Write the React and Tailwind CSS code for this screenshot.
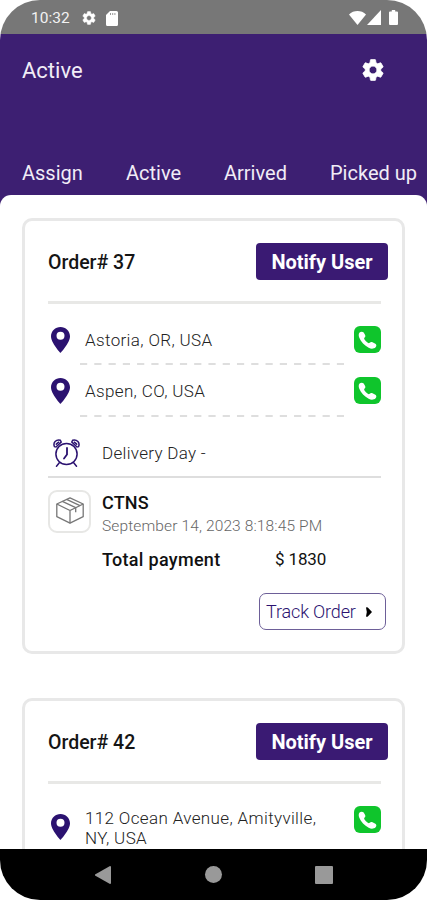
import React from 'react';

const tabs = [
    { label: 'Assign', width: 'w-[104px]' },
    { label: 'Active', width: 'w-[98px]' },
    { label: 'Arrived', width: 'w-[106px]' },
    { label: 'Picked up', width: 'w-[96px]' },
];

const orders = [
    {
        id: 37,
        stops: ['Astoria, OR, USA', 'Aspen, CO, USA'],
        name: 'CTNS',
        date: 'September 14, 2023 8:18:45 PM',
        total: 1830,
    },
    {
        id: 42,
        stops: ['112 Ocean Avenue, Amityville, NY, USA'],
    },
];

const gearPath =
    'M19.14 12.94c.04-.3.06-.61.06-.94 0-.32-.02-.64-.07-.94l2.03-1.58a.49.49 0 0 0 .12-.61l-1.92-3.32a.488.488 0 0 0-.59-.22l-2.39.96c-.5-.38-1.03-.7-1.62-.94l-.36-2.54a.484.484 0 0 0-.48-.41h-3.84c-.24 0-.43.17-.47.41l-.36 2.54c-.59.24-1.13.57-1.62.94l-2.39-.96c-.22-.08-.47 0-.59.22L2.74 8.87c-.12.21-.08.47.12.61l2.03 1.58c-.05.3-.09.63-.09.94s.02.64.07.94l-2.03 1.58a.49.49 0 0 0-.12.61l1.92 3.32c.12.22.37.29.59.22l2.39-.96c.5.38 1.03.7 1.62.94l.36 2.54c.05.24.24.41.48.41h3.84c.24 0 .44-.17.47-.41l.36-2.54c.59-.24 1.13-.56 1.62-.94l2.39.96c.22.08.47 0 .59-.22l1.92-3.32c.12-.22.07-.47-.12-.61l-2.01-1.58zM12 15.6c-1.98 0-3.6-1.62-3.6-3.6s1.62-3.6 3.6-3.6 3.6 1.62 3.6 3.6-1.62 3.6-3.6 3.6z';

const Gear = ({ className }) => (
    <svg viewBox="0 0 24 24" className={className} fill="currentColor" stroke="currentColor" strokeWidth="0.7">
        <path d={gearPath} />
    </svg>
);

const Pin = () => (
    <svg viewBox="0 0 19 26" className="w-[19px] h-[26px] shrink-0" fill="#2b1270">
        <path
            fillRule="evenodd"
            d="M9.5 0C4.3 0 0 4.1 0 9.3 0 16 9.5 26 9.5 26S19 16 19 9.3C19 4.1 14.7 0 9.5 0zm0 4.7a4 4 0 1 1 0 8 4 4 0 0 1 0-8z"
        />
    </svg>
);

const Phone = () => (
    <svg viewBox="0 0 27 27" className="w-[27px] h-[27px] shrink-0">
        <rect width="27" height="27" rx="6" fill="#0fc52c" />
        <path
            fill="#fff"
            d="M5.6 6.6c1-1.2 3-1.3 4.1 0l1.4 2.3c.5 1 .3 1.9-.5 2.7-.6.6-.6 1.1-.1 1.9.8 1.3 1.9 2.4 3.3 3.3.8.5 1.3.5 1.9-.1.8-.8 1.800-1 2.800-.5l2.900 1.500c1.200.9 1.300 2.400.2 3.500-1.700 1.700-4.300 1.900-6.900.6-4.300-2.200-7.700-5.900-9.400-10-.8-2-.9-3.800.3-5.200z"
        />
    </svg>
);

const AlarmClock = () => (
    <svg
        viewBox="0 0 27 28"
        className="w-[27px] h-[28px] shrink-0"
        fill="none"
        stroke="#2b1270"
        strokeWidth="1.5"
        strokeLinecap="round"
    >
        <circle cx="13.5" cy="15" r="10.6" />
        <path d="M14 9v6.500l-3 4" strokeWidth="1.800" />
        <path d="M1.500 7.700C-.3 3.700 3 .2 7.400 1.300L8.200 3 3 8z" />
        <path d="M25.500 7.700C27.300 3.700 24 .2 19.600 1.300L18.800 3 24 8z" />
        <path d="M3.300 5.200l2.400-2M23.700 5.200l-2.400-2" />
        <path d="M6.300 23.700l-2.800 3.500M20.700 23.700l2.800 3.500" />
    </svg>
);

const Box = () => (
    <svg
        viewBox="0 0 28 27"
        className="w-[28px] h-[27px] -mt-[2px]"
        fill="none"
        stroke="#777"
        strokeWidth="1.3"
        strokeLinejoin="round"
    >
        <path d="M14 .8L27.200 7v12.700L14 26.200.8 19.700V7z" />
        <path d="M.8 7L14 13.500 27.200 7M14 13.500v12.700" />
        <path d="M6.300 4.400l13.400 6.300v4.500M10.600 2.400L24 8.600" />
    </svg>
);

const Dashes = () => (
    <svg viewBox="0 0 264 2" className="block w-[264px] h-[2px] ml-[32px]">
        <path d="M0 1H264" stroke="#dedede" strokeWidth="2" strokeDasharray="7.2 7.07" />
    </svg>
);

const StatusBar = () => (
    <div className="flex items-center h-[34px] shrink-0 bg-[#777777] pl-[31px] pr-[29px] text-[#f2f2f2]">
        <span className="w-[50px] text-[15.5px] leading-[20px] pt-[2px]">10:32</span>
        <Gear className="w-[16px] h-[16px] text-white mt-[2px]" />
        <svg viewBox="0 0 12 15" className="w-[12px] h-[15px] ml-[9px] mt-[2px]" fill="#fff">
            <path
                fillRule="evenodd"
                d="M4 0h6.500A1.500 1.500 0 0 1 12 1.500v12a1.500 1.500 0 0 1-1.500 1.500h-9A1.500 1.500 0 0 1 0 13.500V4zM4 2.200v1.500h1V2.200zm2.200 0v1.500h1V2.200zm2.200 0v1.500h1V2.200z"
            />
        </svg>
        <div className="flex items-center ml-auto mt-[1px]">
            <svg viewBox="0 0 17 14" className="w-[17px] h-[14px]" fill="#fff">
                <path d="M8.500 14L0 3.500C4.500-1.100 12.500-1.100 17 3.500z" />
            </svg>
            <svg viewBox="0 0 14 15" className="w-[14px] h-[15px] ml-[1px]" fill="#fff">
                <path d="M14 0v15H0z" />
            </svg>
            <svg viewBox="0 0 9 15" className="w-[9px] h-[15px] ml-[8px]" fill="#fff">
                <path d="M2.800 0h3.400v1.500H8a1 1 0 0 1 1 1V14a1 1 0 0 1-1 1H1a1 1 0 0 1-1-1V2.500a1 1 0 0 1 1-1h1.800z" />
            </svg>
        </div>
    </div>
);

const Header = () => (
    <div className="h-[172px] shrink-0 bg-[#3d1f72] text-[#f1edf7]">
        <div className="flex items-center justify-between pt-[22px] pl-[22px] pr-[41px]">
            <h1 className="text-[22px] leading-[30px]">Active</h1>
            <Gear className="w-[26px] h-[26px] text-white -mt-[3px]" />
        </div>
        <div className="flex pt-[72px] pl-[22px] text-[20px] leading-[30px]">
            {tabs.map((tab) => (
                <div key={tab.label} className={`${tab.width} shrink-0 whitespace-nowrap`}>
                    {tab.label}
                </div>
            ))}
        </div>
    </div>
);

const Stop = ({ address, long }) => (
    <div className="flex items-start">
        <div className="flex flex-1 items-center min-h-[28px]">
            <div className="ml-[3px] mr-[15px]">
                <Pin />
            </div>
            <div
                className={`w-[245px] text-[17px] leading-[20px] tracking-[0.36px] font-light text-[#222] ${long ? 'pt-[2px]' : ''}`}
            >
                {address}
            </div>
        </div>
        <Phone />
    </div>
);

const OrderCard = ({ order }) => (
    <div className="h-[436px] shrink-0 rounded-[10px] border-[3px] border-[#e8e8e8] pl-[23px] pr-[21px]">
        <div className="flex items-center justify-between h-[37px] mt-[22px] -mr-[7px]">
            <h2 className="pt-[2px] text-[19.5px] font-medium text-[#151515]">Order# {order.id}</h2>
            <button className="w-[132px] h-[37px] rounded-[4px] bg-[#3a1a73] text-[20px] font-bold text-white">
                Notify User
            </button>
        </div>
        <div className="h-[3px] mt-[21px] mb-[22px] bg-[#e8e8e6]" />

        <Stop address={order.stops[0]} long={order.stops.length === 1} />
        {order.stops[1] && (
            <>
                <div className="pt-[9px] pb-[12px]">
                    <Dashes />
                </div>
                <Stop address={order.stops[1]} />
                <div className="pt-[10px]">
                    <Dashes />
                </div>

                {/* Delivery day */}
                <div className="flex items-center mt-[21px] h-[30px]">
                    <div className="w-[54px] pl-[5px]">
                        <AlarmClock />
                    </div>
                    <span className="pt-[2px] text-[17px] tracking-[0.3px] font-light text-[#222]">Delivery Day -</span>
                </div>
                <div className="h-[2px] mt-[8px] bg-[#dedede]" />

                {/* Package */}
                <div className="flex mt-[12px]">
                    <div className="flex items-center justify-center w-[43px] h-[43px] mr-[11px] rounded-[9px] border-2 border-[#e7e7e5]">
                        <Box />
                    </div>
                    <div>
                        <div className="text-[18px] leading-[26px] tracking-[0.2px] font-medium text-[#111]">{order.name}</div>
                        <div className="text-[15.5px] leading-[20px] tracking-[0.13px] font-light text-[#666]">{order.date}</div>
                    </div>
                </div>
                <div className="flex mt-[11px] pl-[54px] leading-[26px] text-[#111]">
                    <span className="w-[173px] text-[18px] tracking-[0.3px] font-medium">Total payment</span>
                    <span className="text-[17px] -mt-[1px] tracking-[-0.15px]">$ {order.total}</span>
                </div>

                <div className="flex justify-end mt-[20px] -mr-[5px]">
                    <button className="flex items-center w-[127px] h-[37px] pl-[6px] rounded-[7px] border border-[#6d5f98] text-[18px] tracking-[-0.15px] font-light text-[#2b1270]">
                        Track Order
                        <svg viewBox="0 0 6 10" className="w-[6px] h-[10px] ml-[10px]" fill="#000">
                            <path d="M0 .5Q1-.2 1.800.6L6 5 1.800 9.400Q1 10.200 0 9.500L.8 5z" />
                        </svg>
                    </button>
                </div>
            </>
        )}
    </div>
);

const NavBar = () => (
    <div className="flex items-center h-[51px] shrink-0 bg-black pl-[95px] pr-[94px] justify-between">
        <svg viewBox="0 0 16 18" className="w-[16px] h-[18px]" fill="#999">
            <path d="M15 0q1 0 1 1v16q0 1-1 1L0 9.500v-1z" />
        </svg>
        <div className="w-[17px] h-[17px] rounded-full bg-[#999]" />
        <div className="w-[18px] h-[18px] rounded-[1px] bg-[#999]" />
    </div>
);

export default function App() {
    return (
        <div className="bg-white">
            <div className="flex flex-col w-[427px] h-[900px] overflow-hidden rounded-[40px] bg-white font-[Roboto,sans-serif]">
                <StatusBar />
                <Header />
                <div className="flex flex-col flex-1 min-h-0 overflow-hidden gap-[44px] -mt-[11px] rounded-t-[11px] bg-white pt-[23px] pl-[22px] pr-[22px]">
                    {orders.map((order) => (
                        <OrderCard key={order.id} order={order} />
                    ))}
                </div>
                <NavBar />
            </div>
        </div>
    );
}
